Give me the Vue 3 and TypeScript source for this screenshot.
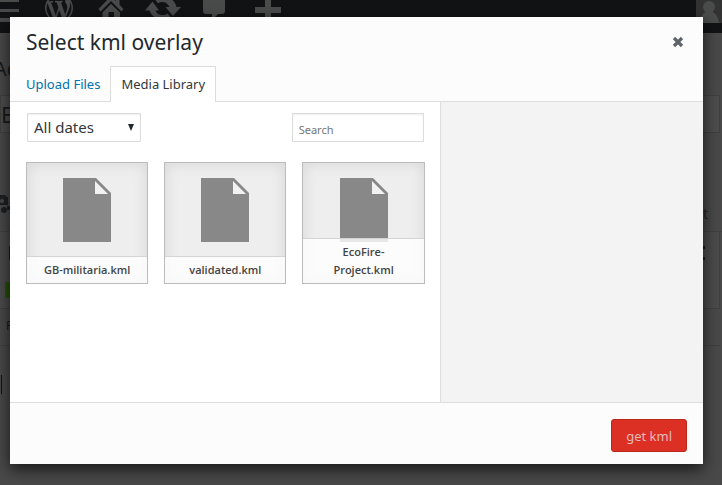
<script setup lang="ts">
import { ref, computed } from 'vue'

interface MediaFile {
  id: number
  name: string
}

const tabs: string[] = ['Upload Files', 'Media Library']
const activeTab = ref<string>('Media Library')
const dates = ref<string>('all')
const query = ref<string>('')
const files: MediaFile[] = [
  { id: 1, name: 'GB-militaria.kml' },
  { id: 2, name: 'validated.kml' },
  { id: 3, name: 'EcoFire-Project.kml' },
]
const shown = computed<MediaFile[]>(() =>
  files.filter((f) => f.name.toLowerCase().includes(query.value.toLowerCase())),
)
</script>

<template>
  <div class="screen">
    <div class="backdrop" aria-hidden="true">
      <div class="adminbar">
        <svg class="bar-icons" width="290" height="33" viewBox="0 0 290 33">
          <path d="M0 0h19v2H0zM0 9h19v3H0zM0 18h19v4H0z" />
          <path
            transform="translate(45 -6) scale(1.4)"
            d="M20 10c0-5.510-4.490-10-10-10C4.480 0 0 4.490 0 10c0 5.520 4.480 10 10 10 5.510 0 10-4.480 10-10zM7.780 15.370L4.370 6.220c.55-.02 1.170-.08 1.170-.08.5-.06.44-1.130-.06-1.110 0 0-1.450.11-2.370.11-.18 0-.37 0-.58-.01C4.120 2.690 6.870 1.110 10 1.110c2.330 0 4.450.87 6.050 2.340-.68-.11-1.650.39-1.650 1.580 0 .74.45 1.360.9 2.100.35.61.55 1.360.55 2.460 0 1.490-1.400 5-1.400 5l-3.030-8.370c.54-.02.82-.17.82-.17.5-.05.44-1.250-.06-1.220 0 0-1.440.12-2.380.12-.87 0-2.330-.12-2.330-.12-.5-.03-.56 1.200-.06 1.220l.92.08 1.260 3.410zM17.410 10c.24-.64.74-1.870.43-4.250.7 1.290 1.050 2.710 1.050 4.250 0 3.290-1.730 6.240-4.400 7.780.97-2.590 1.940-5.200 2.920-7.780zM6.100 18.090C3.120 16.650 1.110 13.530 1.110 10c0-1.300.23-2.480.72-3.590C3.250 10.300 4.670 14.200 6.100 18.090zm4.030-6.630l2.580 6.980c-.86.29-1.760.45-2.710.45-.79 0-1.570-.11-2.290-.33.81-2.380 1.620-4.740 2.420-7.100z"
          />
          <path d="M111 -4 98.500 9l2 2.500L111 1l10.500 10.500 2-2.500-4-4.200V-2h-3.500v3z" />
          <path d="M102.500 12.500 111 4l9 8.500V22h-6V12h-5.500v10h-6z" />
          <path d="M145 10.500 152.500 1.500 159 10.500h-3.500c1 3 3.500 4.500 7 4.500 2 0 3.600-.6 5-1.600l3.500 4C164 22 152 19 149.500 10.500z" />
          <path d="M181 7 173 16 165.500 7h4C168 3.500 165 1.700 161.500 2c-1.300.1-2.400.6-3.400 1.300L154.500 -1C161-6 174-4 176.500 7z" />
          <path d="M203 0h22v11q0 3-3 3h-4l-6 6v-6h-6q-3 0-3-3z" />
          <path d="M265 -4h6V7h10v6h-10v10h-6V13h-10V7h10z" />
        </svg>
        <svg class="avatar" width="26" height="23" viewBox="0 0 26 23">
          <rect width="26" height="23" fill="#333" />
          <circle cx="13" cy="7" r="6" />
          <path d="M3 23c1-6 4-10 7-11h6c4 1 6 5 7 11z" />
        </svg>
      </div>
      <div class="page-heading">Ad</div>
      <div class="title-field">E</div>
      <div class="page-tools">
        <svg width="20" height="20" viewBox="0 0 20 20">
          <path d="M0 1h5l2 2h1v8H0zM10 6l5-1v10h-1V8l-3 1v7H7v-4h3z" />
          <circle cx="2" cy="7" r="2" fill="#4b4b4b" />
          <circle cx="4" cy="16" r="3" />
        </svg>
        <span>Text</span>
      </div>
      <div class="editor">
        <span class="swatch green"></span>
        <span class="swatch brown"></span>
        <span class="dots"><i></i><i></i></span>
      </div>
      <div class="path-row">P</div>
      <div class="below"><span class="caret"></span></div>
    </div>

    <section class="dialog" role="dialog" aria-modal="true" aria-labelledby="dialog-title">
      <header class="head">
        <h1 id="dialog-title">Select kml overlay</h1>
        <button class="close" type="button" aria-label="Close">
          <svg width="12" height="12" viewBox="0 0 12 12">
            <path d="M2 2l8 8M10 2l-8 8" stroke="#5d646a" stroke-width="3.200" />
          </svg>
        </button>
      </header>
      <nav class="tabs">
        <a
          v-for="tab in tabs"
          :key="tab"
          href="#"
          :class="{ active: tab === activeTab }"
          @click.prevent="activeTab = tab"
        >{{ tab }}</a>
      </nav>
      <div class="body">
        <div class="library">
          <div class="filters">
            <div class="select-wrap">
              <select v-model="dates" aria-label="Filter by date">
                <option value="all">All dates</option>
              </select>
              <svg class="arrow" width="6" height="7" viewBox="0 0 6 7"><path d="M0 0h6L3 7z" /></svg>
            </div>
            <input v-model="query" type="search" placeholder="Search" aria-label="Search media" />
          </div>
          <ul class="files">
            <li v-for="file in shown" :key="file.id">
              <button type="button" class="file">
                <svg class="doc" width="48" height="64" viewBox="0 0 48 64">
                  <path d="M0 0h33l15 15v49H0z" fill="#888" />
                  <path d="M32 3v13h13z" fill="#f1f1f1" />
                </svg>
                <span class="name">{{ file.name }}</span>
              </button>
            </li>
          </ul>
        </div>
        <aside class="details"></aside>
      </div>
      <footer class="foot">
        <button type="button" class="primary">get kml</button>
      </footer>
    </section>
  </div>
</template>

<style>
body {
  margin: 0;
  background: #4b4b4b;
}
</style>

<style scoped>
* {
  box-sizing: border-box;
}
.screen {
  position: relative;
  display: flex;
  min-height: 100vh;
  padding: 17px 19px 21px 10px;
  overflow: hidden;
  font-family: "Noto Sans", "Open Sans", sans-serif;
  color: #23282d;
}
.backdrop {
  position: absolute;
  inset: 0;
  display: flex;
  flex-direction: column;
  background: #494949;
  color: #17191b;
}
.adminbar {
  display: flex;
  justify-content: space-between;
  height: 33px;
  background: #111315;
  fill: #4a4c4c;
}
.page-heading {
  height: 62px;
  padding-top: 20px;
  margin-left: -6px;
  font-size: 20px;
  line-height: 32px;
}
.title-field {
  height: 38px;
  margin-right: 2px;
  border: 1px solid #404040;
  background: #4d4d4d;
  font-size: 22px;
  line-height: 36px;
}
.page-tools {
  display: flex;
  justify-content: space-between;
  height: 99px;
  padding: 61px 14px 0 0;
  border-bottom: 1px solid #414141;
  font-size: 14px;
  line-height: 40px;
  color: #222426;
  fill: #1d2023;
}
.editor {
  display: flex;
  align-items: flex-start;
  height: 77px;
  margin-right: 2px;
  padding: 14px 14px 0 5px;
  border: solid #404040;
  border-width: 0 1px 1px 0;
  background: #4b4b4b;
}
.swatch {
  width: 12px;
  height: 14px;
}
.brown {
  background: #251d17;
}
.green {
  height: 16px;
  margin: 36px -8px 0 0;
  background: #245008;
}
.dots {
  display: grid;
  gap: 8px;
  margin-left: auto;
}
.dots i {
  width: 4px;
  height: 3px;
  background: #17191b;
}
.path-row {
  height: 37px;
  margin-right: 2px;
  padding-left: 6px;
  border-bottom: 1px solid #404040;
  font-size: 12px;
  line-height: 34px;
}
.below {
  flex: 1;
  padding: 29px 1px 0;
}
.caret {
  display: block;
  width: 1px;
  height: 19px;
  background: #111;
}
.dialog {
  position: relative;
  display: flex;
  flex: 1;
  flex-direction: column;
  min-width: 0;
  background: #fcfcfc;
  box-shadow: 0 5px 15px rgba(0, 0, 0, 0.7);
}
.head {
  display: flex;
  align-items: center;
  justify-content: space-between;
  height: 49px;
  padding: 0 14px 0 16px;
}
h1 {
  margin: 0;
  font-size: 21px;
  font-weight: 400;
  line-height: 50px;
}
.close {
  display: grid;
  place-items: center;
  width: 22px;
  height: 22px;
  padding: 0;
  border: 0;
  background: none;
}
.tabs {
  display: flex;
  height: 36px;
  padding-left: 6px;
  border-bottom: 1px solid #ddd;
}
.tabs a {
  height: 36px;
  padding: 0 10px;
  border: solid transparent;
  border-width: 1px 1px 0;
  color: #0073aa;
  font-size: 13px;
  line-height: 34px;
  text-decoration: none;
  white-space: nowrap;
}
.tabs a:first-child {
  border-left: 0;
  border-right: 0;
}
.tabs a.active {
  border-color: #ddd;
  background: #fff;
  color: #32373c;
}
.body {
  display: flex;
  flex: 1;
}
.library {
  flex: 1;
  min-width: 0;
  padding: 11px 15px 16px 16px;
  background: #fff;
}
.details {
  flex: 0 0 38%;
  border-left: 1px solid #ddd;
  background: #f3f3f3;
}
.filters {
  display: flex;
  justify-content: space-between;
  padding: 0 1px;
}
.select-wrap {
  position: relative;
}
select,
input {
  display: block;
  height: 29px;
  margin: 0;
  border: 1px solid #ddd;
  border-radius: 0;
  background: #fff;
  box-shadow: inset 0 1px 2px rgba(0, 0, 0, 0.07);
  color: #32373c;
  font-family: inherit;
  appearance: none;
}
select {
  width: 114px;
  padding: 0 6px;
  font-size: 15px;
  line-height: 27px;
}
input {
  width: 132px;
  padding: 4px 6px 0;
  font-size: 11px;
}
input::placeholder {
  color: #757575;
}
.arrow {
  position: absolute;
  top: 11px;
  right: 7px;
  fill: #23282d;
  pointer-events: none;
}
.files {
  display: grid;
  grid-template-columns: repeat(3, 1fr);
  gap: 16px;
  margin: 20px 0 0;
  padding: 0;
  list-style: none;
}
.file {
  position: relative;
  display: flex;
  flex-direction: column;
  align-items: center;
  width: 100%;
  height: 122px;
  padding: 15px 0 0;
  border: 1px solid #bbb;
  background: #eee;
  box-shadow: inset 0 0 15px rgba(0, 0, 0, 0.1);
  font-family: "Open Sans", "Noto Sans", sans-serif;
}
.doc {
  flex: none;
}
.name {
  position: absolute;
  right: 0;
  bottom: 0;
  left: 0;
  padding: 4px 10px;
  border-top: 1px solid #d4d4d4;
  background: rgba(255, 255, 255, 0.8);
  color: #444;
  font-size: 11px;
  font-weight: 600;
  line-height: 18px;
}
.foot {
  display: flex;
  align-items: center;
  justify-content: flex-end;
  height: 62px;
  padding: 4px 16px 0;
  border-top: 1px solid #ddd;
}
.primary {
  height: 33px;
  padding: 0 14px;
  border: 1px solid #ba281e;
  border-radius: 3px;
  background: #dc3025;
  color: #e4b9b9;
  font-family: inherit;
  font-size: 13px;
}
</style>
